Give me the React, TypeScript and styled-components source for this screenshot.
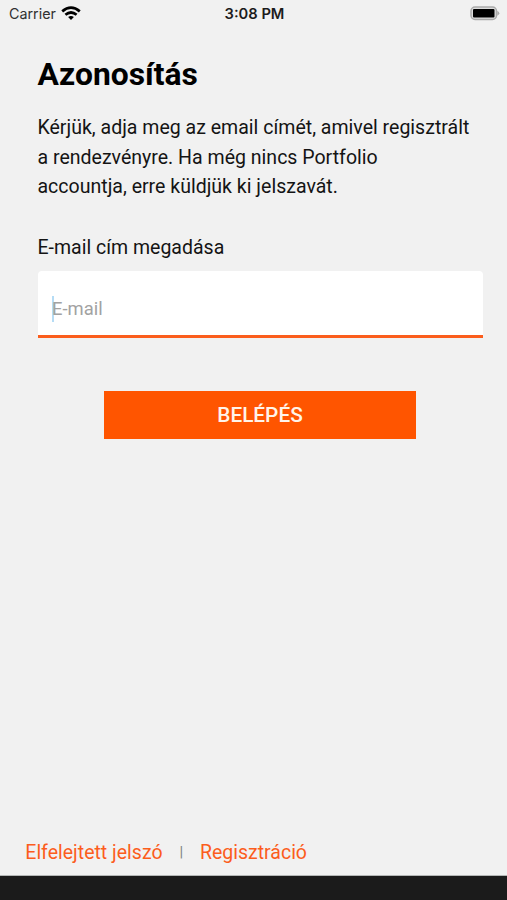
import React from 'react';
import styled, { createGlobalStyle } from 'styled-components';

const Global = createGlobalStyle`
  * { box-sizing: border-box; }
  body { margin: 0; background: #f1f1f1; font-family: Roboto, sans-serif; color: #141414; }
  h1, p { margin: 0; }
`;
const Screen = styled.div`
  width: 507px; height: 900px; display: flex; flex-direction: column; overflow: hidden; background: #f1f1f1;
`;
const StatusBar = styled.header`
  height: 27px; display: grid; grid-template-columns: 1fr auto 1fr; align-items: center;
  padding: 0 7px 0 9px; font-family: Inter, sans-serif; font-size: 14.3px; line-height: 27px;
`;
const Carrier = styled.div`display: flex; align-items: center; gap: 5px; color: #303030;`;
const Clock = styled.div`padding-top: 2px; font-weight: 600; font-size: 14.7px; line-height: 25px; color: #1c1c1c;`;
const Battery = styled.svg`justify-self: end; display: block;`;
const Main = styled.main`flex: 1; padding: 28px 24px 0 37.5px;`;
const Title = styled.h1`font-size: 31.8px; line-height: 38px; font-weight: 700; color: #000;`;
const Intro = styled.p`margin-top: 20.4px; font-size: 19.55px; line-height: 29.2px; white-space: nowrap;`;
const Label = styled.label`display: block; margin-top: 32px; font-size: 19.5px; line-height: 29px;`;
const Field = styled.div`
  margin-top: 9px; height: 67px; display: flex; align-items: center; padding: 11px 14px 0;
  background: #fff; border-bottom: 3px solid #fb5d1c; border-radius: 4px 4px 0 0;
`;
const Caret = styled.span`width: 2px; height: 26px; margin-right: -1.5px; background: #b5dcf5;`;
const Input = styled.input`
  flex: 1; border: 0; outline: 0; padding: 0; background: none; font: 18.4px Roboto, sans-serif;
  &::placeholder { color: #a2a2a2; opacity: 1; }
`;
const Submit = styled.button`
  display: block; width: 312px; height: 48px; margin: 53px 0 0 66.5px; padding: 0 0 1px; border: 0;
  background: #ff5500; color: #fff4ea; font: 500 20.8px Roboto, sans-serif;
`;
const Links = styled.nav`
  display: flex; align-items: center; height: 30px; margin-bottom: 8px; padding-left: 25.3px;
  font-size: 19.5px; color: #fc5d1c;
`;
const Divider = styled.span`width: 37.4px; text-align: center; font-size: 15px; color: #808080;`;
const Bottom = styled.footer`height: 25px; background: #1b1b1b; border-top: 1px solid #b4b7b6;`;

export default function App() {
  return (
    <Screen>
      <Global />
      <StatusBar>
        <Carrier>
          <span>Carrier</span>
          <svg width="20" height="15" viewBox="0 0 20 15" fill="none" stroke="#000" strokeWidth="2.7">
            <path d="M1.2 5.4Q10-2 18.8 5.4M4.4 8.8Q10 4.2 15.6 8.8" />
            <path d="M7.1 11Q10 8.8 12.9 11L10 14z" fill="#000" stroke="none" />
          </svg>
        </Carrier>
        <Clock>3:08 PM</Clock>
        <Battery width="30" height="15" viewBox="0 0 30 15">
          <rect x="1" y="1" width="25.5" height="12.5" rx="4" fill="#ddd" stroke="#aaa" strokeWidth="1.5" />
          <rect x="3" y="3" width="21.5" height="8.5" rx="1" />
          <path d="M27.3 4.7q4 2.5 0 5z" fill="#aaa" />
        </Battery>
      </StatusBar>
      <Main>
        <Title>Azonosítás</Title>
        <Intro>Kérjük, adja meg az email címét, amivel regisztrált<br />a rendezvényre. Ha még nincs Portfolio<br />accountja, erre küldjük ki jelszavát.</Intro>
        <Label htmlFor="email">E-mail cím megadása</Label>
        <Field><Caret /><Input id="email" placeholder="E-mail" /></Field>
        <Submit>BELÉPÉS</Submit>
      </Main>
      <Links><span>Elfelejtett jelszó</span><Divider>|</Divider><span>Regisztráció</span></Links>
      <Bottom />
    </Screen>
  );
}
